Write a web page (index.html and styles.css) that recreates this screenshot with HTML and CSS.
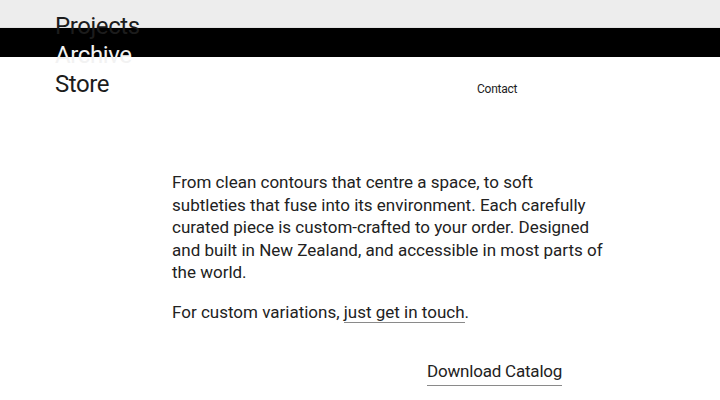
FILE: index.html
```html
<!DOCTYPE html>
<html lang="en">
<head>
<meta charset="utf-8">
<title>Store</title>
<link rel="stylesheet" href="styles.css">
</head>
<body>
<header class="site-header">
  <nav class="main-nav">
    <a class="nav-link nav-projects" href="#">Projects</a>
    <a class="nav-link nav-archive" href="#">Archive</a>
    <a class="nav-link nav-store" href="#">Store</a>
  </nav>
  <a class="contact-link" href="#">Contact</a>
</header>
<main class="content">
  <p class="intro">From clean contours that centre a space, to soft subtleties that fuse into its environment. Each carefully curated piece is custom-crafted to your order. Designed and built in New Zealand, and accessible in most parts of the world.</p>
  <p class="intro">For custom variations, <a class="inline-link" href="#">just get in touch</a>.</p>
  <div class="download-row">
    <a class="download-link" href="#">Download Catalog</a>
  </div>
</main>
</body>
</html>
```

FILE: styles.css
```css
html, body {
  margin: 0;
  padding: 0;
}
body {
  background: #fff;
  color: #222;
  font-family: Roboto, "Liberation Sans", Arial, sans-serif;
  width: 720px;
  height: 400px;
  overflow: hidden;
}
a {
  color: inherit;
  text-decoration: none;
}
.site-header {
  display: grid;
  grid-template-columns: 422px auto;
  align-items: end;
  padding: 12px 0 0 55px;
  background: linear-gradient(to bottom, #ededed 0, #ededed 27px, #e2e2e2 27px, #e2e2e2 28px, #000 28px, #000 57px, #fff 57px);
}
.main-nav {
  display: flex;
  flex-direction: column;
}
.nav-link {
  font-size: 24px;
  line-height: 29px;
  letter-spacing: -0.4px;
  color: #1c1c1c;
}
.nav-archive {
  color: #f2f2f2;
}
.contact-link {
  font-size: 12px;
  line-height: 14px;
  letter-spacing: -0.25px;
  margin-bottom: 3px;
  color: #222;
}
.content {
  padding: 72px 0 0 172px;
  width: 435px;
}
.intro {
  margin: 0 0 17px;
  font-size: 17px;
  line-height: 22.5px;
}
.inline-link {
  border-bottom: 1px solid #8a8a8a;
}
.download-row {
  display: flex;
  padding: 20px 0 0 255px;
}
.download-link {
  font-size: 17px;
  line-height: 22px;
  letter-spacing: -0.2px;
  padding-bottom: 3px;
  border-bottom: 1px solid #8a8a8a;
}
```
